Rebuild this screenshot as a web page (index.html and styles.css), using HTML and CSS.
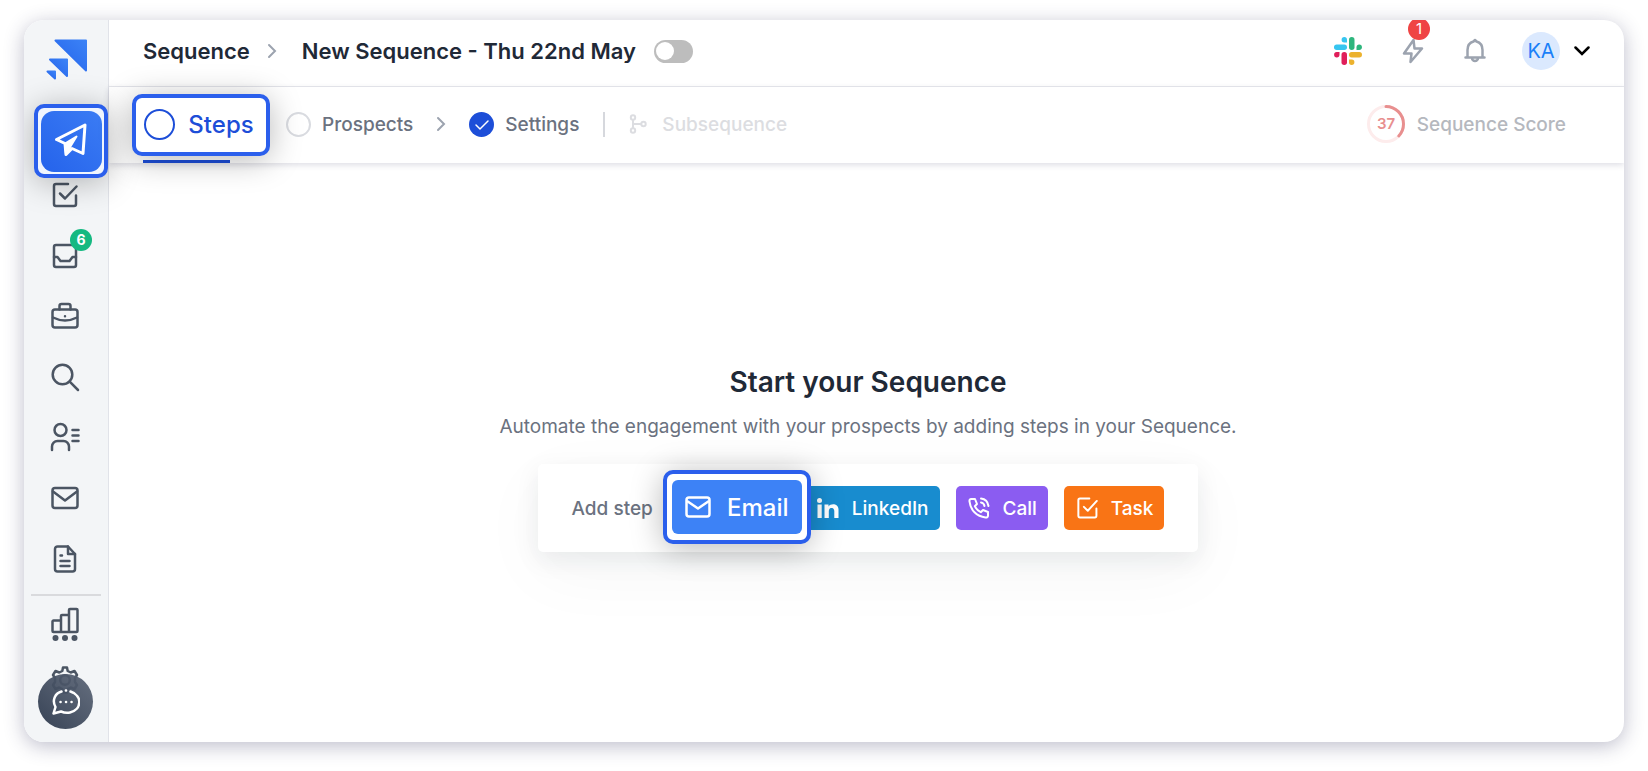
FILE: index.html
```html
<!DOCTYPE html>
<html lang="en">
<head>
  <meta charset="UTF-8">
  <meta name="viewport" content="width=device-width, initial-scale=1.0">
  <title>New Sequence - Thu 22nd May</title>
  <link rel="stylesheet" href="styles.css">
</head>
<body>
  <div class="app">
    <aside class="sidebar">
      <a class="logo" href="#" aria-label="Home">
        <svg width="41" height="41" viewBox="0 0 41 41">
          <defs>
            <linearGradient id="brand" x1="0" y1="1" x2="1" y2="0">
              <stop offset="0" stop-color="#2563eb"/>
              <stop offset="1" stop-color="#3b82f6"/>
            </linearGradient>
          </defs>
          <g fill="url(#brand)" stroke="url(#brand)" stroke-width="2" stroke-linejoin="round">
            <path d="M9.500 1.500H40V31.500z"/>
            <path d="M4 20.500H21V37z"/>
            <path d="M1.500 32.500H9V39.500z"/>
          </g>
        </svg>
      </a>
      <nav class="side-nav">
        <div class="side-item">
          <a class="callout send" href="#" aria-label="Sequences">
            <span class="send-tile">
              <svg width="34" height="34" viewBox="0 0 34 34" fill="none" stroke="#fff" stroke-width="3" stroke-linejoin="round" stroke-linecap="round">
                <path d="M31 2L2.500 16.500l8.500 4 1 11 6-6 11 5z"/>
                <path d="M11 20.500L22.500 13.500l-5.500 9-5 9z" fill="#fff" stroke-width="2"/>
              </svg>
            </span>
          </a>
        </div>
        <a class="side-item" href="#" aria-label="Tasks">
          <svg class="icon" viewBox="0 0 28 28"><path d="M17 3H5a2 2 0 0 0-2 2v18a2 2 0 0 0 2 2h18a2 2 0 0 0 2-2v-8.500"/><path d="M9 12.500l5 5L25.500 5.500"/></svg>
        </a>
        <a class="side-item" href="#" aria-label="Inbox">
          <span class="with-badge">
            <svg class="icon" viewBox="0 0 28 28"><rect x="3" y="3" width="22" height="22" rx="2"/><path d="M3 15h3.500l3 4h9l3-4H25"/></svg>
            <span class="badge badge-green">6</span>
          </span>
        </a>
        <a class="side-item" href="#" aria-label="Opportunities">
          <svg class="icon" viewBox="0 0 28 28"><rect x="1.500" y="7.500" width="25" height="18" rx="2.500"/><path d="M8.500 7.500V4a2 2 0 0 1 2-2h7a2 2 0 0 1 2 2v3.500M2 15.500q12 6 24 0M14 14.200v.1"/></svg>
        </a>
        <a class="side-item" href="#" aria-label="Search">
          <svg class="icon" viewBox="0 0 28 28"><circle cx="11.500" cy="11.500" r="9.800"/><path d="M18.700 18.700L27 27"/></svg>
        </a>
        <a class="side-item" href="#" aria-label="Prospects">
          <svg class="icon" viewBox="0 0 28 28"><circle cx="9.500" cy="7" r="6"/><path d="M1 27v-3.500a5.500 5.500 0 0 1 5.500-5.500h6a5.500 5.500 0 0 1 5.500 5.500V27M21.500 7h6M21.500 12.500h6M21.500 18h6"/></svg>
        </a>
        <a class="side-item" href="#" aria-label="Email accounts">
          <svg class="icon" viewBox="0 0 28 28"><rect x="1.500" y="4" width="25" height="20" rx="2.500"/><path d="M2 7.500l12 9 12-9"/></svg>
        </a>
        <a class="side-item" href="#" aria-label="Templates">
          <svg class="icon" viewBox="0 0 28 28"><path d="M17 1.500H6.500A2.500 2.500 0 0 0 4 4v20a2.500 2.500 0 0 0 2.500 2.500h15A2.500 2.500 0 0 0 24 24V9z"/><path d="M17 1.500V9h7M9.500 10.500h1.500M9.500 16h9M9.500 21h9"/></svg>
        </a>
      </nav>
      <div class="side-footer">
        <a class="side-item" href="#" aria-label="Reports">
          <svg width="28" height="34" viewBox="0 0 28 34" fill="none" stroke="#4b5563" stroke-width="2.500" stroke-linejoin="round"><path d="M10 25H2.500a1 1 0 0 1-1-1V14.500a1 1 0 0 1 1-1H10zM10 25V9a1 1 0 0 1 1-1h7v17zM18 25V3a1 1 0 0 1 1-1h6.500a1 1 0 0 1 1 1v21a1 1 0 0 1-1 1z"/><g fill="#4b5563" stroke="none"><circle cx="4.500" cy="31" r="3"/><circle cx="14" cy="31" r="3"/><circle cx="23.500" cy="31" r="3"/></g></svg>
        </a>
        <a class="side-item" href="#" aria-label="Account settings">
          <svg class="icon" viewBox="0 0 28 28"><path d="M11.300 5L12 1.500h4L16.700 5l3 1.500L23.500 5l2.500 4-2 3v4l2 3-2.500 4-3.800-1.500-3 1.500-.7 3.500h-4l-.7-3.500-3-1.500L4.500 23 2 19l2-3v-4L2 9l2.500-4 3.800 1.500z"/><circle cx="14" cy="14" r="4.800"/></svg>
        </a>
        <button class="chat" type="button" aria-label="Chat">
          <svg width="28" height="28" viewBox="0 0 28 28" fill="none" stroke="#fff" stroke-width="2.500" stroke-linecap="round" stroke-linejoin="round">
            <path d="M18.500 3.500C31 7.500 29.500 22 18 24.500q-4.500 1-9-1L1.500 25.500l2-6.500C-.5 12 3.500 5 9.500 3.500"/>
            <path d="M13.900 2.500h.2M8.500 14h.1M14 14h.1M19.500 14h.1"/>
          </svg>
        </button>
      </div>
    </aside>

    <div class="page">
      <header class="topbar">
        <a class="crumb" href="#">Sequence</a>
        <svg class="crumb-arrow" width="10" height="16" viewBox="0 0 10 16"><path d="M2 2l6 6-6 6"/></svg>
        <h1 class="seq-name">New Sequence - Thu 22nd May</h1>
        <input class="toggle" type="checkbox" role="switch" aria-label="Activate sequence">
        <div class="top-actions">
          <a href="#" aria-label="Slack">
            <svg width="28" height="28" viewBox="0 0 28 28">
              <g fill="#36c5f0"><rect x="0" y="7.500" width="13" height="5.500" rx="2.700"/><path d="M13 5.500V2.700a2.700 2.700 0 1 0-2.800 2.800z"/></g>
              <g fill="#2eb67d"><rect x="15" y="0" width="5.500" height="13" rx="2.700"/><path d="M22.500 13h2.700a2.700 2.700 0 1 0-2.700-2.800z"/></g>
              <g fill="#ecb22e"><rect x="15" y="15" width="13" height="5.500" rx="2.700"/><path d="M15 22.500v2.700a2.700 2.700 0 1 0 2.800-2.700z"/></g>
              <g fill="#e01e5a"><rect x="7.500" y="15" width="5.500" height="13" rx="2.700"/><path d="M5.500 15H2.700a2.700 2.700 0 1 0 2.800 2.800z"/></g>
            </svg>
          </a>
          <a class="with-badge" href="#" aria-label="Activity">
            <svg class="gray-icon" width="22" height="26" viewBox="0 0 22 26"><path d="M11.500 2L2 15.500h7.500L8.500 24 20 10.500h-7.500z"/></svg>
            <span class="badge badge-red">1</span>
          </a>
          <a href="#" aria-label="Notifications">
            <svg class="gray-icon" width="22" height="26" viewBox="0 0 22 26"><path d="M1.500 19.500h19M3.500 19.500V12c0-4.500 2.500-7.500 6-8.500l1.500-1.500 1.500 1.500c3.500 1 6 4 6 8.500v7.500M8 20a3 3 0 0 0 6 0"/></svg>
          </a>
          <button class="account" type="button" aria-label="Account menu">
            <span class="avatar">KA</span>
            <svg width="16" height="10" viewBox="0 0 16 10" fill="none" stroke="#000" stroke-width="2.500" stroke-linecap="round"><path d="M1.500 1.500L8 8l6.500-6.500"/></svg>
          </button>
        </div>
      </header>

      <nav class="tabs">
        <div class="tab-current">
          <a class="callout steps" href="#">
            <span class="steps-ring"></span>
            Steps
          </a>
        </div>
        <a class="tab" href="#"><span class="ring"></span>Prospects</a>
        <svg class="crumb-arrow" width="10" height="16" viewBox="0 0 10 16"><path d="M2 2l6 6-6 6"/></svg>
        <a class="tab" href="#">
          <svg width="25" height="25" viewBox="0 0 25 25"><circle cx="12.500" cy="12.500" r="12.500" fill="#1d4ed8"/><path d="M7 13l4 4 8-8" fill="none" stroke="#fff" stroke-width="1.500" stroke-linecap="round"/></svg>
          Settings
        </a>
        <span class="divider"></span>
        <button class="subsequence" type="button" disabled>
          <svg width="18" height="20" viewBox="0 0 18 20" fill="none" stroke="#dcdde1" stroke-width="2"><circle cx="4" cy="3.500" r="2.200"/><circle cx="4" cy="16.500" r="2.200"/><circle cx="14.500" cy="10" r="2.200"/><path d="M4 6v8M4 10h8"/></svg>
          Subsequence
        </button>
        <div class="score">
          <svg width="38" height="38" viewBox="0 0 38 38" fill="none" stroke-width="3">
            <circle cx="19" cy="19" r="17.500" stroke="#fdecec"/>
            <circle cx="19" cy="19" r="17.500" stroke="#e88f8f" stroke-linecap="round" pathLength="100" stroke-dasharray="37 63" transform="rotate(-90 19 19)"/>
            <text class="score-value" x="19" y="24" text-anchor="middle">37</text>
          </svg>
          Sequence Score
        </div>
      </nav>

      <main class="start">
        <h2>Start your Sequence</h2>
        <p>Automate the engagement with your prospects by adding steps in your Sequence.</p>
        <div class="add-step">
          <span>Add step</span>
          <div class="email-slot">
            <div class="callout email-box">
              <button class="email" type="button">
                <svg width="26" height="22" viewBox="0 0 26 22" fill="none" stroke="#fff" stroke-width="2.500" stroke-linejoin="round"><rect x="1.500" y="1.500" width="23" height="19" rx="2.500"/><path d="M2 5l11 7.500L24 5"/></svg>
                Email
              </button>
            </div>
          </div>
          <button class="step linkedin" type="button">
            <svg width="22" height="20" viewBox="0 0 22 20" fill="#fff"><circle cx="2.500" cy="2.500" r="2.500"/><path d="M.5 6.500h4.200V20H.5zM7.500 6.500h4v2c2-3.500 10-3.500 10 3V20h-4.200v-7c0-4-5.500-4-5.500 0v7H7.500z"/></svg>
            LinkedIn
          </button>
          <button class="step call" type="button">
            <svg width="22" height="22" viewBox="0 0 22 22" fill="none" stroke="#fff" stroke-width="2" stroke-linecap="round" stroke-linejoin="round"><path d="M7 2H3.200C2 2 1.300 2.800 1.500 4.500 2.500 13 8.500 19.500 17.500 20.500c1.500.1 2.500-.5 2.500-1.800V15l-5-2-2.200 2.200Q8.500 13 6.800 9.200L9 7z"/><path d="M13 5.500q3 .5 3.500 3.500M13 1.500q6.500.7 7.500 7.500"/></svg>
            Call
          </button>
          <button class="step task" type="button">
            <svg width="22" height="22" viewBox="0 0 28 28" fill="none" stroke="#fff" stroke-width="2.500" stroke-linecap="round" stroke-linejoin="round"><path d="M17 2H5a2 2 0 0 0-2 2v20a2 2 0 0 0 2 2h19a2 2 0 0 0 2-2v-9.500M10 12.500l5 5L26.500 5"/></svg>
            Task
          </button>
        </div>
      </main>
    </div>
  </div>
</body>
</html>
```

FILE: styles.css
```css
* { box-sizing: border-box; }
body { margin: 0; padding: 20px 24px 29px; font-family: Inter, sans-serif; background: #fff; color: #1f2937; }
a { color: inherit; text-decoration: none; }
button { font: inherit; border: 0; background: none; padding: 0; cursor: pointer; }
svg { display: block; flex-shrink: 0; }
h1, h2, p { margin: 0; }

.app { display: flex; min-height: calc(100vh - 49px); border-radius: 20px; overflow: hidden; background: #fff; box-shadow: 0 4px 20px rgba(50, 50, 93, 0.32); }

/* Highlighted controls */
.callout { position: absolute; z-index: 2; display: flex; align-items: center; justify-content: center; border: 4px solid #2b5fec; border-radius: 10px; background: #fff; box-shadow: 0 4px 32px rgba(0, 0, 0, 0.28); }

/* Sidebar */
.sidebar { display: flex; flex-direction: column; width: 85px; flex-shrink: 0; background: #f3f5f7; border-right: 1px solid #e1e3e9; }
.logo { display: flex; justify-content: center; padding: 19px 0 24px; }
.side-nav { display: flex; flex-direction: column; flex: 1; padding-bottom: 5px; }
.side-item { position: relative; display: flex; flex: 1; align-items: center; justify-content: center; padding-right: 2px; }
.icon { width: 28px; height: 28px; fill: none; stroke: #4b5563; stroke-width: 2.5; stroke-linecap: round; stroke-linejoin: round; overflow: visible; }
.send { top: 0; left: 10px; width: 74px; height: 74px; background: #f0f5fe; }
.send-tile { display: flex; align-items: center; justify-content: center; width: 61px; height: 61px; padding-bottom: 2px; border-radius: 13px; background: linear-gradient(45deg, #2563eb, #3b7cf4); }
.with-badge { position: relative; }
.badge { position: absolute; width: 22px; height: 22px; border-radius: 50%; color: #fff; font-size: 14px; line-height: 22px; text-align: center; }
.badge-green { top: -13px; right: -13px; background: #15b981; font-weight: 700; }
.badge-red { top: -20px; right: -6px; background: #ef4444; font-size: 15px; }
.side-footer { position: relative; display: flex; flex-direction: column; height: 148px; border-top: 2px solid #d9dadd; margin: 0 7px; }
.side-footer .side-item { flex: 0 0 56px; padding-right: 2px; }
.chat { position: absolute; left: 7px; bottom: 13px; display: flex; align-items: center; justify-content: center; width: 55px; height: 55px; border-radius: 50%; background: linear-gradient(45deg, rgba(45, 57, 77, 0.95), rgba(90, 100, 117, 0.92)); }

/* Top bar */
.page { display: flex; flex-direction: column; flex: 1; min-width: 0; }
.topbar { display: flex; align-items: center; height: 67px; padding: 0 34px 4px; border-bottom: 1px solid #e8e9ed; font-size: 22px; }
.crumb { font-weight: 600; }
.crumb-arrow { fill: none; stroke: #9ca3af; stroke-width: 2; stroke-linecap: round; }
.topbar .crumb-arrow { margin: 0 25px 0 17px; }
.seq-name { font-size: 22px; font-weight: 600; line-height: 24px; overflow: hidden; white-space: nowrap; }
.toggle { appearance: none; width: 39px; height: 23px; margin: 0 0 0 18px; padding: 2px; border-radius: 12px; background: #bdbdbd; }
.toggle::before { content: ""; display: block; width: 18px; height: 18px; border-radius: 50%; background: #fff; }
.top-actions { display: flex; align-items: center; gap: 40px; margin-left: auto; }
.gray-icon { fill: none; stroke: #9ca3af; stroke-width: 2.5; stroke-linejoin: round; stroke-linecap: round; }
.account { display: flex; align-items: center; gap: 14px; margin-left: -4px; }
.avatar { width: 38px; height: 38px; border-radius: 50%; background: #dbe9fe; color: #1a80f8; font-size: 20px; line-height: 38px; text-align: center; }

/* Tabs */
.tabs { display: flex; align-items: center; height: 76px; padding: 0 58px 2px 34px; color: #6b7280; font-size: 19px; font-weight: 500; box-shadow: 0 2px 6px rgba(50, 50, 93, 0.16); }
.tab-current { position: relative; align-self: stretch; width: 87px; margin: 0 56px -2px 0; border-bottom: 3px solid #1d4ed8; }
.steps { top: 7px; left: -11px; width: 138px; height: 62px; gap: 13px; padding: 0 4px 2px 0; color: #1d4ed8; font-size: 24px; }
.steps-ring { width: 31px; height: 31px; border: 2px solid #1d4ed8; border-radius: 50%; }
.tab { display: flex; align-items: center; gap: 11px; }
.ring { width: 25px; height: 25px; border: 2px solid #d9dbe0; border-radius: 50%; }
.tabs .crumb-arrow { margin: 0 23px; }
.divider { width: 2px; height: 25px; margin: 0 24px; background: #d6d8dd; }
.subsequence { display: flex; align-items: center; gap: 15px; color: #dcdde1; cursor: default; }
.score { display: flex; align-items: center; gap: 12px; margin-left: auto; color: #b5b8be; }
.score-value { fill: #e88f8f; stroke: none; font-size: 15px; font-weight: 600; }

/* Empty state */
.start { display: flex; flex-direction: column; flex: 1; align-items: center; justify-content: center; padding: 12px 0 0 3px; }
.start h2 { font-size: 28px; font-weight: 600; line-height: 34px; }
.start p { margin: 14px 0 23px; color: #6b7280; font-size: 19px; line-height: 28px; }
.add-step { display: flex; align-items: center; height: 88px; gap: 16px; padding: 0 34px; border-radius: 5px; background: #fff; color: #6b7280; font-size: 19px; font-weight: 500; box-shadow: 0 8px 24px rgba(31, 41, 55, 0.08), 0 20px 70px rgba(31, 41, 55, 0.04); }
.email-slot { position: relative; width: 104px; height: 44px; margin-left: 16px; }
.email-box { inset: -16px -22px -14px; }
.email { display: flex; align-items: center; justify-content: center; gap: 16px; width: 130px; height: 54px; border-radius: 6px; background: #3d82f6; color: #fff; font-size: 24px; }
.step { display: flex; align-items: center; gap: 13px; height: 44px; padding: 0 11px 0 12px; border-radius: 5px; color: #fff; }
.linkedin { background: #188ccf; }
.call { background: #8b5cf1; }
.task { background: #f97415; }
```
